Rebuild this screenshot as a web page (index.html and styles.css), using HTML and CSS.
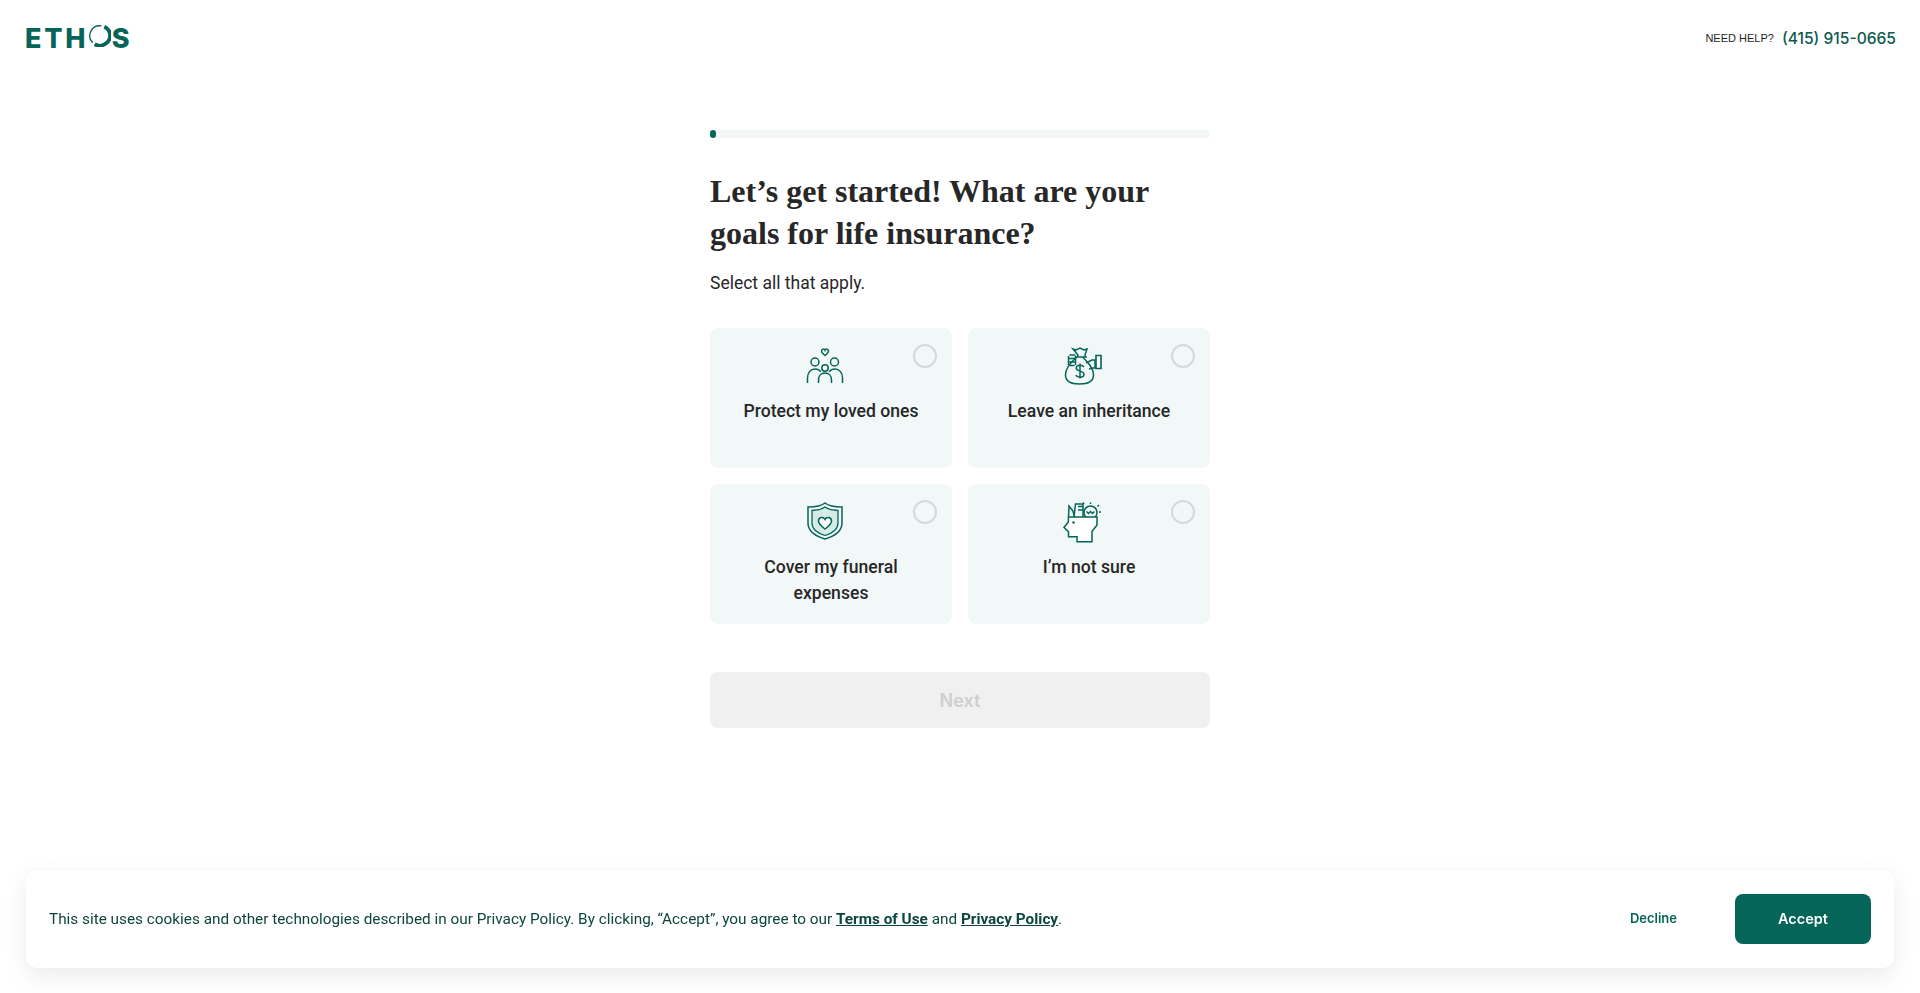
FILE: index.html
```html
<!DOCTYPE html>
<html lang="en">

<head>
    <title>Ethos</title>
    <meta charset="UTF-8">
    <link rel="stylesheet" href="styles.css">
</head>

<body>
<header class="top-bar">
    <div class="logo">ETH<span class="logo-o">O<svg viewBox="0 0 24 24" aria-hidden="true"><path d="M17 2.800A10 10 0 0 1 19 20 10 10 0 0 1 7 21" fill="none" stroke="#056558" stroke-width="4"/><path d="M14 2A10.300 10.300 0 0 0 5 19.500" fill="none" stroke="#056558" stroke-width="1.400"/></svg></span>S</div>
    <div class="help">
        <span class="help-label">NEED HELP?</span>
        <span class="help-phone">(415) 915-0665</span>
    </div>
</header>

<main class="quiz">
    <div class="progress"><div class="progress-fill"></div></div>
    <h1>Let’s get started! What are your goals for life insurance?</h1>
    <p class="hint">Select all that apply.</p>

    <div class="options">
        <div class="option">
            <span class="radio"></span>
            <svg class="option-icon" viewBox="0 0 48 48">
                <path class="line" d="M18 11.500c-1.600-1.500-3.500-2.600-3.500-4.200 0-2.400 2.700-3 3.500-1 .8-2 3.500-1.400 3.500 1 0 1.600-1.900 2.700-3.500 4.200z"/>
                <circle class="line" cx="8" cy="18" r="4"/>
                <circle class="line" cx="27.500" cy="18" r="4"/>
                <circle class="line" cx="18" cy="24" r="3.200"/>
                <path class="line" d="M0.500 39v-5c0-5 3-9 7.500-9 2.500 0 4.500 1 5.800 2.800"/>
                <path class="line" d="M35.500 39v-5c0-5-3-9-7.500-9-2.500 0-4.500 1-5.800 2.800"/>
                <path class="line" d="M11.500 39v-3c0-4 2.500-7 6.500-7s6.500 3 6.500 7v3"/>
            </svg>
            <span class="option-label">Protect my loved ones</span>
        </div>
        <div class="option">
            <span class="radio"></span>
            <svg class="option-icon" viewBox="0 0 48 48">
                <path class="line" d="M8 5l3 1 4-2 4 2 3-1-2 6 1 2h-9l1-2z"/>
                <path class="line" d="M12 13C6 18 .5 25 .5 31c0 6 5 9 14 9s14-3 14-9c0-7-6-13-11-18"/>
                <path class="line" d="M21 19l6-3h3v8h-4c0 0-1 1-2 1"/>
                <path class="line-thick" d="M31 11.500h5v13h-5z"/>
                <path class="line" d="M4.500 11h6M3.500 14.500h7M3.500 18h7M4.500 21.500h5M3.500 12v9M10.500 12v9"/>
                <path class="line" d="M19 23c-.8-1.200-2.200-1.800-4-1.800-2.200 0-3.800 1.100-3.800 2.800 0 4 7.800 2.200 7.800 6.200 0 1.800-1.700 3-4 3-1.900 0-3.400-.7-4.200-2M15 19.500v15"/>
            </svg>
            <span class="option-label">Leave an inheritance</span>
        </div>
        <div class="option">
            <span class="radio"></span>
            <svg class="option-icon" viewBox="0 0 48 48">
                <path class="line" d="M18 3c-3 2.500-9 4-17 4v16c0 8 7 13 17 16 10-3 17-8 17-16V7c-8 0-14-1.500-17-4z"/>
                <path class="shield-fill" d="M18 7c-3 2-8 3.300-13 3.500V23c0 6 5 10 13 12.500C26 33 31 29 31 23V10.500C26 10.300 21 9 18 7z"/>
                <path class="heart" d="M18 29c-3.500-2.700-6.500-4.900-6.500-8 0-3.800 4.800-4.800 6.500-1.500 1.700-3.300 6.500-2.300 6.500 1.500 0 3.100-3 5.300-6.500 8z"/>
            </svg>
            <span class="option-label">Cover my funeral expenses</span>
        </div>
        <div class="option">
            <span class="radio"></span>
            <svg class="option-icon" viewBox="0 0 48 48">
                <path class="line" d="M3.500 17L4 6l4 5 1.500 6"/>
                <path class="line" d="M9 17L10.500 4h7.500v13M13 10h4.500M13 6.500h4.500"/>
                <circle class="line" cx="25.500" cy="12.500" r="6.500"/>
                <path class="line" d="M21.500 11.500l2 2 2-2 2 2 2-2M25.500 2.500v1.500M34 5l-1.500 1.500M36 12h-2M18 2.500l1 1.500"/>
                <path class="head" d="M3.500 17H32v8l-5 6.500v10.200H12v-5H3.500v-5L-1 27.500l4.300-5.500z"/>
                <circle class="eye" cx="8.500" cy="22.500" r="1.200"/>
            </svg>
            <span class="option-label">I’m not sure</span>
        </div>
    </div>

    <button class="next" type="button" disabled>Next</button>
</main>

<!-- cookie banner -->
<div class="cookie">
    <p class="cookie-text">This site uses cookies and other technologies described in our Privacy Policy. By clicking, “Accept”, you agree to our <a href="#">Terms of Use</a> and <a href="#">Privacy Policy</a>.</p>
    <button class="decline" type="button">Decline</button>
    <button class="accept" type="button">Accept</button>
</div>
</body>

</html>
```

FILE: styles.css
```css
* {
    box-sizing: border-box;
}

body {
    margin: 0;
    background-color: #ffffff;
    color: #272727;
    font-family: Roboto, "Liberation Sans", sans-serif;
}

/* top bar */
.top-bar {
    display: flex;
    justify-content: space-between;
    align-items: center;
    height: 76px;
    padding: 0 24px 0 25px;
}

.logo {
    color: #056558;
    font-family: Inter, sans-serif;
    font-size: 27px;
    line-height: 27px;
    font-weight: 800;
    letter-spacing: 2.700px;
}

.logo-o {
    position: relative;
    color: transparent;
}

.logo-o svg {
    position: absolute;
    left: 0;
    top: 2px;
    width: 23px;
    height: 23px;
}

.help {
    display: flex;
    align-items: center;
    gap: 8px;
}

.help-label {
    font-family: "Liberation Sans", sans-serif;
    font-size: 11px;
    color: #1f1f1f;
}

.help-phone {
    color: #0b5a4e;
    font-family: Inter, sans-serif;
    font-size: 15.600px;
    font-weight: 500;
}

/* quiz column */
.quiz {
    width: 500px;
    margin: 54px auto 0;
}

.progress {
    height: 8px;
    background-color: #f3f6f6;
    border-radius: 4px;
}

.progress-fill {
    width: 6px;
    height: 8px;
    background-color: #056558;
    border-radius: 3px;
}

h1 {
    margin: 32px 0 0;
    font-family: "Liberation Serif", serif;
    font-size: 32px;
    line-height: 42px;
    font-weight: 700;
}

.hint {
    margin: 16px 0 0;
    font-size: 17.500px;
    line-height: 26px;
}

.options {
    display: grid;
    grid-template-columns: 242px 242px;
    gap: 16px;
    margin-top: 32px;
}

.option {
    position: relative;
    display: flex;
    flex-direction: column;
    align-items: center;
    height: 140px;
    padding: 16px 16px 0;
    background-color: #f2f7f7;
    border-radius: 8px;
}

.radio {
    position: absolute;
    top: 16px;
    right: 15px;
    width: 24px;
    height: 24px;
    border: 2px solid #d5d9d9;
    border-radius: 50%;
}

.option-icon {
    width: 48px;
    height: 48px;
    flex: none;
    overflow: visible;
}

.line {
    fill: none;
    stroke: #056558;
    stroke-width: 1.500;
}

.line-thick {
    fill: #ffffff;
    stroke: #056558;
    stroke-width: 1.600;
}

.shield-fill {
    fill: #d6ebe5;
    stroke: #056558;
    stroke-width: 1.300;
}

.heart {
    fill: #ffffff;
    stroke: #056558;
    stroke-width: 1.500;
}

.head {
    fill: #ffffff;
    stroke: #056558;
    stroke-width: 1.500;
}

.eye {
    fill: #056558;
}

.option-label {
    margin-top: 6px;
    font-size: 17.600px;
    line-height: 26px;
    font-weight: 500;
    text-align: center;
}

.next {
    display: block;
    width: 100%;
    height: 56px;
    margin-top: 48px;
    border: none;
    border-radius: 8px;
    background-color: #f0f0f0;
    color: #cfcfcf;
    font-family: Inter, sans-serif;
    font-size: 18px;
    font-weight: 600;
}

/* cookie banner */
.cookie {
    position: fixed;
    left: 26px;
    right: 26px;
    bottom: 25px;
    display: flex;
    align-items: center;
    height: 98px;
    padding: 0 23px;
    background-color: #ffffff;
    border-radius: 10px;
    box-shadow: 0 8px 24px rgba(0, 0, 0, 0.08), 0 0 2px rgba(0, 0, 0, 0.06);
}

.cookie-text {
    flex: 1;
    margin: 0;
    color: #0c463c;
    font-size: 15.340px;
}

.cookie-text a {
    color: #0c463c;
    font-weight: 700;
}

.decline {
    margin: 0 58px 2px 0;
    padding: 0;
    border: none;
    background: none;
    color: #056558;
    font-family: Inter, sans-serif;
    font-size: 13px;
    font-weight: 600;
}

.accept {
    width: 136px;
    height: 50px;
    padding-bottom: 2px;
    border: none;
    border-radius: 8px;
    background-color: #056558;
    color: #ffffff;
    font-family: Inter, sans-serif;
    font-size: 14.500px;
    font-weight: 600;
}
```
